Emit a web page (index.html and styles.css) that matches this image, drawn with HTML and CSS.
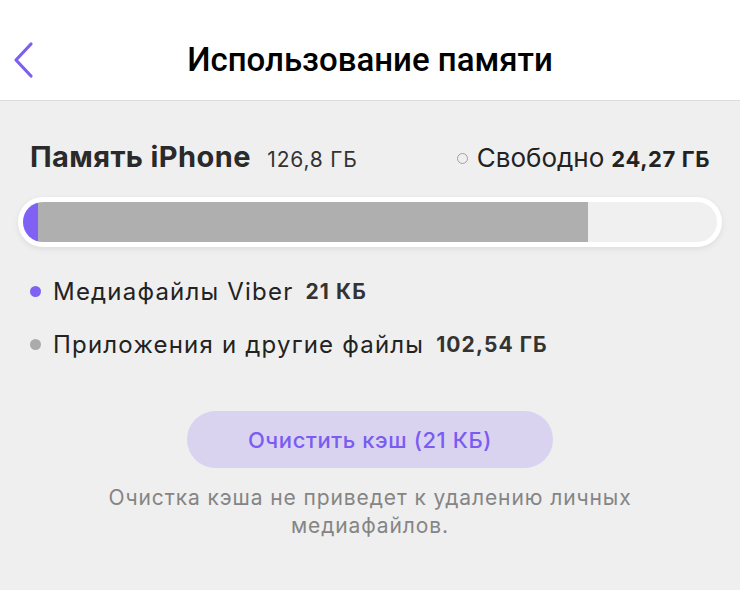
FILE: index.html
```html
<!DOCTYPE html>
<html lang="ru">
<head>
    <meta charset="UTF-8">
    <meta name="viewport" content="width=device-width, initial-scale=1.0">
    <title>Использование памяти</title>
    <link rel="stylesheet" href="styles.css">
</head>
<body>

    <!-- Top navigation bar -->
    <header class="navbar">
        <button class="back-btn" type="button" aria-label="Назад">
            <svg width="22" height="38" viewBox="0 0 22 38">
                <path d="M19 3 L4 19 L19 35" fill="none" stroke="#7c5ff0" stroke-width="3.2" stroke-linecap="round" stroke-linejoin="round"/>
            </svg>
        </button>
        <h1 class="navbar-title">Использование памяти</h1>
    </header>

    <main class="content">
        <!-- Storage summary -->
        <div class="summary">
            <div class="device">
                <span class="device-name">Память iPhone</span>
                <span class="device-total">126,8 ГБ</span>
            </div>
            <div class="free">
                <span class="free-dot"></span>
                <span>Свободно</span>
                <b>24,27 ГБ</b>
            </div>
        </div>

        <!-- Usage bar -->
        <div class="usage-bar">
            <div class="usage-track">
                <span class="segment viber" style="width: 15px"></span>
                <span class="segment other" style="width: 550px"></span>
            </div>
        </div>

        <!-- Legend -->
        <ul class="legend">
            <li>
                <span class="legend-dot viber"></span>
                <span class="legend-label">Медиафайлы Viber</span>
                <b>21 КБ</b>
            </li>
            <li>
                <span class="legend-dot other"></span>
                <span class="legend-label">Приложения и другие файлы</span>
                <b>102,54 ГБ</b>
            </li>
        </ul>

        <div class="actions">
            <button type="button" class="clear-btn">Очистить кэш (21 КБ)</button>
            <p class="hint">Очистка кэша не приведет к удалению личных медиафайлов.</p>
        </div>
    </main>

</body>
</html>
```

FILE: styles.css
```css
* {
    margin: 0;
    padding: 0;
    box-sizing: border-box;
}

body {
    font-family: Inter, "Liberation Sans", sans-serif;
    background-color: #efefef;
    color: #1c1c1c;
    width: 740px;
    height: 590px;
    overflow: hidden;
}

.navbar {
    height: 101px;
    background-color: #fff;
    border-bottom: 1px solid #dcdcdc;
    display: flex;
    align-items: center;
    justify-content: center;
    position: relative;
    padding-top: 18px;
}

.back-btn {
    position: absolute;
    left: 12px;
    top: 41px;
    border: none;
    background: none;
    display: flex;
}

.navbar-title {
    font-family: Roboto, "Liberation Sans", sans-serif;
    font-size: 33px;
    font-weight: 500;
    color: #000;
}

.content {
    padding: 0 18px;
}

.summary {
    display: flex;
    justify-content: space-between;
    align-items: baseline;
    padding: 38px 12px 0 12px;
    height: 96px;
}

.device-name {
    font-size: 29px;
    font-weight: 700;
    letter-spacing: 0.4px;
    color: #2a2a2a;
    margin-right: 12px;
}

.device-total {
    font-size: 21px;
    letter-spacing: 0.8px;
    color: #333;
}

.free {
    display: flex;
    align-items: baseline;
    gap: 7px;
    font-size: 26px;
    color: #222;
}

.free b {
    font-weight: 700;
    font-size: 22px;
    letter-spacing: 0.6px;
}

.free-dot {
    width: 11px;
    height: 11px;
    border-radius: 50%;
    border: 1.5px solid #a0a0a0;
    margin-right: 2px;
    align-self: center;
    position: relative;
    top: 1px;
}

.usage-bar {
    height: 50px;
    background-color: #f0f0f0;
    border: 5px solid #fff;
    border-radius: 25px;
    overflow: hidden;
    box-shadow: 0 2px 6px rgba(0, 0, 0, 0.08);
}

.usage-track {
    display: flex;
    height: 100%;
}

.segment {
    display: block;
    height: 100%;
}

.segment.viber {
    background-color: #7f61f4;
    border-radius: 20px 0 0 20px;
}

.segment.other {
    background-color: #afafaf;
}

.legend {
    list-style: none;
    padding: 18px 10px 0 10px;
}

.legend li {
    display: flex;
    align-items: center;
    height: 53px;
    font-size: 24px;
    letter-spacing: 1.2px;
    color: #222;
}

.legend b {
    font-size: 21px;
    font-weight: 700;
    letter-spacing: 1.1px;
    margin-left: 12px;
    color: #333;
}

.legend-dot {
    width: 11px;
    height: 11px;
    border-radius: 50%;
    margin-right: 12px;
    margin-left: 2px;
}

.legend-dot.viber {
    background-color: #7f61f4;
}

.legend-dot.other {
    background-color: #ababab;
}

.actions {
    display: flex;
    flex-direction: column;
    align-items: center;
    padding-top: 40px;
}

.clear-btn {
    width: 366px;
    height: 57px;
    border: none;
    border-radius: 29px;
    background-color: #d9d3f0;
    color: #7a5cf2;
    font-family: Inter, "Liberation Sans", sans-serif;
    font-size: 22px;
    font-weight: 500;
    letter-spacing: 0.6px;
}

.hint {
    margin-top: 16px;
    width: 580px;
    text-align: center;
    font-size: 21px;
    letter-spacing: 0.9px;
    line-height: 28px;
    color: #858585;
}
```
